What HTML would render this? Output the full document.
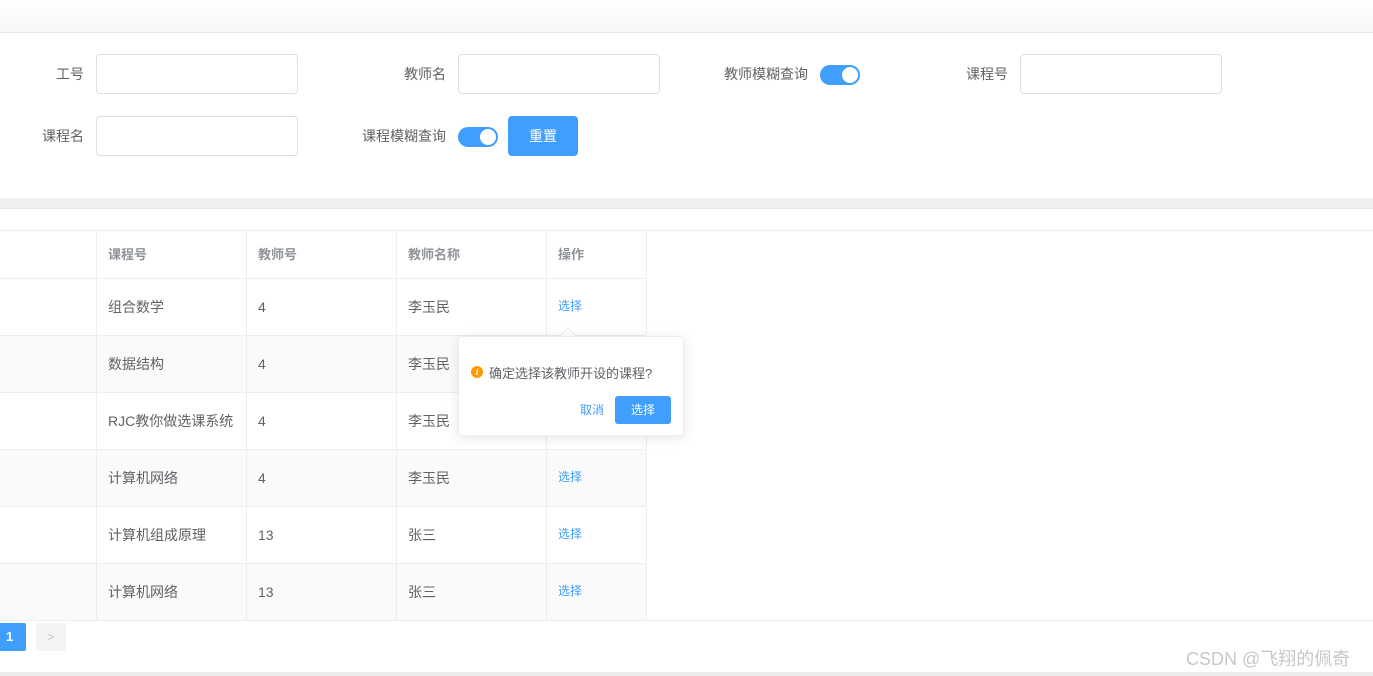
<!DOCTYPE html>
<html><head><meta charset="utf-8"><style>
*{box-sizing:border-box;margin:0;padding:0}
body{width:1373px;height:676px;overflow:hidden;background:#fff;font-family:"Liberation Sans","Noto Sans CJK SC",sans-serif;font-size:14px;color:#606266;position:relative}
.a{position:absolute}
.lbl{position:absolute;font-size:14px;color:#606266;text-align:right;line-height:40px}
.inp{position:absolute;width:202px;height:40px;border:1px solid #dcdfe6;border-radius:4px;background:#fff}
.sw{position:absolute;width:40px;height:20px;border-radius:10px;background:#409eff}
.sw:after{content:"";position:absolute;right:2px;top:2px;width:16px;height:16px;border-radius:50%;background:#fff}
.row{position:absolute;left:0;width:646px;height:57px;border-bottom:1px solid #ebeef5}
.c{position:absolute;top:0;height:100%;line-height:57px;padding-left:11px;border-right:1px solid #ebeef5;font-size:14px;color:#606266}
.lnk{color:#409eff;font-size:12px}
</style></head><body>
<div class="a" style="left:0;top:0;width:1373px;height:33px;background:linear-gradient(#fff,#f7f7f7);border-bottom:1px solid #e8e8e8"></div>
<div class="lbl" style="left:0;width:84px;top:54px">工号</div><div class="inp" style="left:96px;top:54px"></div>
<div class="lbl" style="left:340px;width:106px;top:54px">教师名</div><div class="inp" style="left:458px;top:54px"></div>
<div class="lbl" style="left:700px;width:108px;top:54px">教师模糊查询</div><div class="sw" style="left:820px;top:65px"></div>
<div class="lbl" style="left:900px;width:108px;top:54px">课程号</div><div class="inp" style="left:1020px;top:54px"></div>
<div class="lbl" style="left:0;width:84px;top:116px">课程名</div><div class="inp" style="left:96px;top:116px"></div>
<div class="lbl" style="left:340px;width:106px;top:116px">课程模糊查询</div><div class="sw" style="left:458px;top:127px"></div>
<div class="a" style="left:508px;top:116px;width:70px;height:40px;background:#409eff;border-radius:4px;color:#fff;text-align:center;line-height:40px">重置</div>
<div class="a" style="left:0;top:198px;width:1373px;height:11px;background:#f0f0f0;border-bottom:1px solid #e6e6e6"></div>
<div class="a" style="left:0;top:230px;width:1373px;height:1px;background:#ebeef5"></div>
<div class="row" style="top:231px;height:48px">
<div class="c" style="left:0;width:97px;line-height:47px"></div>
<div class="c" style="left:97px;width:150px;line-height:47px;font-weight:bold;color:#909399;font-size:13px">课程号</div>
<div class="c" style="left:247px;width:150px;line-height:47px;font-weight:bold;color:#909399;font-size:13px">教师号</div>
<div class="c" style="left:397px;width:150px;line-height:47px;font-weight:bold;color:#909399;font-size:13px">教师名称</div>
<div class="c" style="left:547px;width:100px;line-height:47px;font-weight:bold;color:#909399;font-size:13px">操作</div></div>
<div class="row" style="top:279px"><div class="c" style="left:0;width:97px"></div><div class="c" style="left:97px;width:150px">组合数学</div><div class="c" style="left:247px;width:150px">4</div><div class="c" style="left:397px;width:150px">李玉民</div><div class="c lnk" style="left:547px;width:100px;line-height:55px">选择</div></div>
<div class="row" style="top:336px;background:#fafafa"><div class="c" style="left:0;width:97px"></div><div class="c" style="left:97px;width:150px">数据结构</div><div class="c" style="left:247px;width:150px">4</div><div class="c" style="left:397px;width:150px">李玉民</div><div class="c lnk" style="left:547px;width:100px">选择</div></div>
<div class="row" style="top:393px"><div class="c" style="left:0;width:97px"></div><div class="c" style="left:97px;width:150px">RJC教你做选课系统</div><div class="c" style="left:247px;width:150px">4</div><div class="c" style="left:397px;width:150px">李玉民</div><div class="c lnk" style="left:547px;width:100px">选择</div></div>
<div class="row" style="top:450px;background:#fafafa"><div class="c" style="left:0;width:97px"></div><div class="c" style="left:97px;width:150px">计算机网络</div><div class="c" style="left:247px;width:150px">4</div><div class="c" style="left:397px;width:150px">李玉民</div><div class="c lnk" style="left:547px;width:100px;line-height:55px">选择</div></div>
<div class="row" style="top:507px"><div class="c" style="left:0;width:97px"></div><div class="c" style="left:97px;width:150px">计算机组成原理</div><div class="c" style="left:247px;width:150px">13</div><div class="c" style="left:397px;width:150px">张三</div><div class="c lnk" style="left:547px;width:100px;line-height:55px">选择</div></div>
<div class="row" style="top:564px;background:#fafafa"><div class="c" style="left:0;width:97px"></div><div class="c" style="left:97px;width:150px">计算机网络</div><div class="c" style="left:247px;width:150px">13</div><div class="c" style="left:397px;width:150px">张三</div><div class="c lnk" style="left:547px;width:100px;line-height:55px">选择</div></div>
<div class="a" style="left:0;top:620px;width:1373px;height:1px;background:#ebeef5"></div>
<div class="a" style="left:0;top:623px;width:26px;height:28px;background:#409eff;border-radius:0 2px 2px 0;color:#fff;font-weight:bold;font-size:13px;line-height:28px;padding-left:6px">1</div>
<div class="a" style="left:36px;top:623px;width:30px;height:28px;background:#f4f4f5;border-radius:2px;color:#c0c4cc;text-align:center;line-height:28px;font-size:12px">&gt;</div>
<div class="a" style="left:0;top:672px;width:1373px;height:4px;background:#ececec"></div>
<div class="a" style="left:1186px;top:645px;font-size:18px;color:#c8c8c8">CSDN @飞翔的佩奇</div>
<div class="a" style="left:562px;top:330px;width:12px;height:12px;background:#fff;border-left:1px solid #ebeef5;border-top:1px solid #ebeef5;transform:rotate(45deg)"></div>
<div class="a" style="left:458px;top:336px;width:226px;height:100px;background:#fff;border:1px solid #ebeef5;border-radius:4px;box-shadow:0 2px 12px rgba(0,0,0,.1)">
<div class="a" style="left:12px;top:29px;width:12px;height:12px;border-radius:50%;background:#ff9900;color:#fff;font-size:9px;font-weight:bold;font-style:italic;text-align:center;line-height:12px">i</div>
<div class="a" style="left:30px;top:26px;font-size:13px;color:#606266">确定选择该教师开设的课程?</div>
<div class="a" style="left:121px;top:64px;font-size:12px;color:#409eff">取消</div>
<div class="a" style="left:156px;top:59px;width:56px;height:28px;background:#409eff;border-radius:3px;color:#fff;font-size:12px;text-align:center;line-height:28px">选择</div>
</div>
</body></html>
